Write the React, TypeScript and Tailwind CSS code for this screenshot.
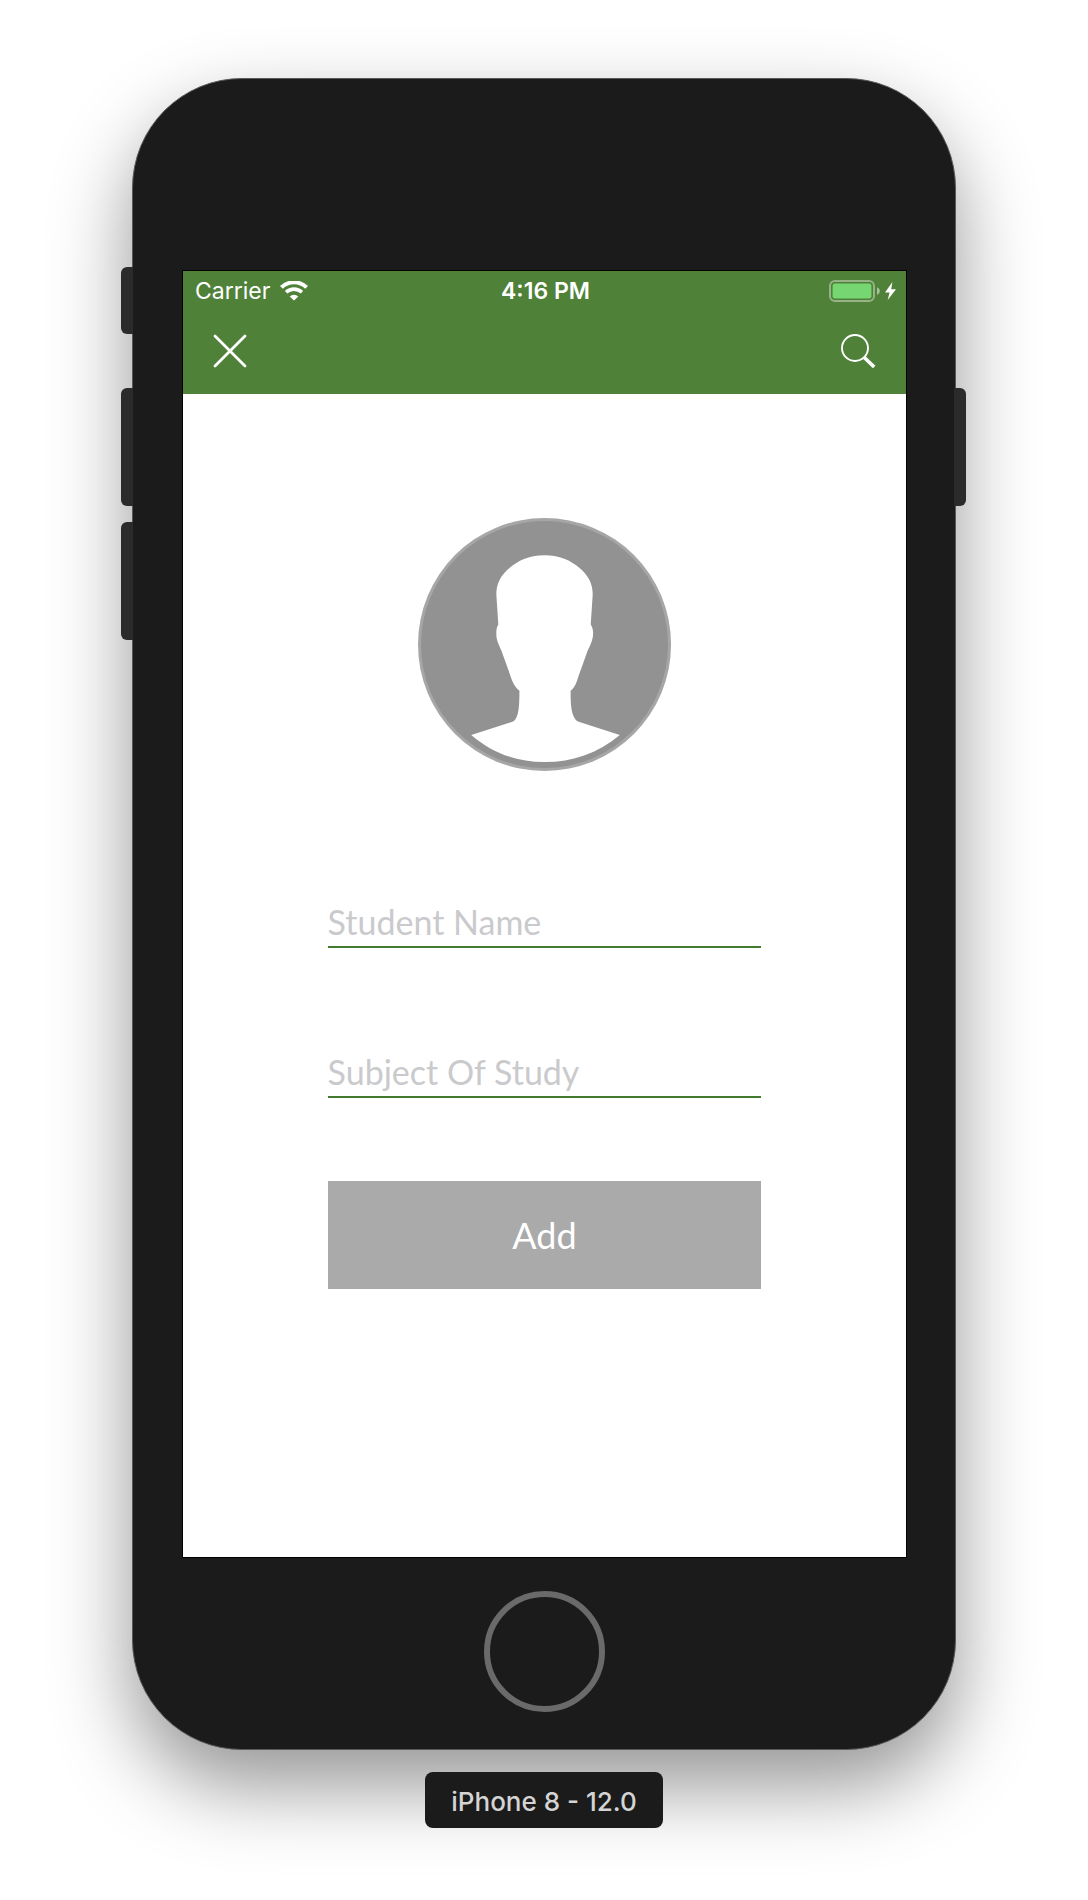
import React from "react";

function WifiIcon() {
  return (
    <svg width="28" height="20" viewBox="0 0 28 20" fill="none" stroke="#fff" aria-hidden="true">
      <path d="M1.4 6.4a18 18 0 0 1 25.200 0" strokeWidth="4" />
      <path d="M6.1 11.300a11.400 11.400 0 0 1 15.800 0" strokeWidth="3.6" />
      <path d="M9.700 15.400a6.200 6.200 0 0 1 8.600 0L14 19.600z" fill="#fff" stroke="none" />
    </svg>
  );
}

function BatteryIcon() {
  return (
    <svg width="52" height="22" viewBox="0 0 52 22" aria-hidden="true">
      <rect x="1" y="1" width="44" height="20" rx="5" fill="none" stroke="#fff" strokeOpacity="0.4" strokeWidth="2" />
      <rect x="3.6" y="3.4" width="38.8" height="15.2" rx="2.4" fill="#76d672" />
      <path d="M48 7.2c1.8.7 2.8 2.2 2.8 3.8s-1 3.1-2.8 3.8z" fill="#fff" fillOpacity="0.5" />
    </svg>
  );
}

function BoltIcon() {
  return (
    <svg width="11" height="18" viewBox="0 0 11 18" fill="#fff" aria-hidden="true">
      <path d="M7.4 0L0 10.4h4.5L2.7 18 11 7.3H6.2z" />
    </svg>
  );
}

function CloseIcon() {
  return (
    <svg width="34" height="34" viewBox="0 0 34 34" fill="none" stroke="#fff" strokeWidth="2.8" strokeLinecap="round" aria-hidden="true">
      <path d="M2 2l30 30M32 2L2 32" />
    </svg>
  );
}

function SearchIcon() {
  return (
    <svg width="35" height="35" viewBox="0 0 35 35" fill="none" stroke="#fff" aria-hidden="true">
      <circle cx="14" cy="14" r="13" strokeWidth="1.9" />
      <path d="M23 23.2L33.2 33" strokeWidth="3.6" />
    </svg>
  );
}

function Avatar() {
  return (
    <svg className="w-[35%] overflow-visible" viewBox="0 0 252 252" role="img" aria-label="Student photo">
      <circle cx="126" cy="126" r="126" fill="#a6a6a6" />
      <circle cx="126" cy="126" r="123" fill="#929292" />
      <path
        fill="#fff"
        d="M126 37C142 37 153 43 160 49C170 57 174 66 174 76L172 106C174 109 175 113 174 119C173 124 171 128 169 132L160 157C158 163 157 168 152 172C152 184 152 199 160 203L201 216C180 234 154 243 126 243S74 234 53 216L94 203C101 200 101 184 101 172C96 168 94 163 92 157L83 132C81 127 78 122 78 116C78 112 78 109 80 106L78 76C78 66 82 57 92 49C99 43 110 37 126 37Z"
      />
    </svg>
  );
}

function Field({ name, label, className }: { name: string; label: string; className: string }) {
  return (
    <div className={className}>
      <input
        name={name}
        type="text"
        aria-label={label}
        placeholder={label}
        className="block h-12 w-full border-b-2 border-[#427a2e] bg-transparent p-0 pb-[3px] font-['Lato',sans-serif] text-[34px] text-gray-700 outline-none placeholder:text-[#cacacd]"
      />
    </div>
  );
}

export default function App() {
  return (
    <main className="flex min-h-screen flex-col items-center bg-white px-10 pt-[78px] pb-[72px] font-['Inter',sans-serif]">
      <div className="relative w-full max-w-[824px]">
        <div className="rounded-[110px] border border-[#5a5a5a] bg-[#1b1b1b] pt-48 pr-[49px] pb-[37px] pl-[50px] shadow-[0_36px_80px_rgba(0,0,0,0.42)]">
          <div className="bg-white outline outline-black">
            <header className="bg-[#4f8138] pb-[3px] text-white">
              <div className="grid h-10 grid-cols-3 items-center pr-[10px] pl-3 text-[23px] leading-6">
                <div className="flex items-center gap-[10px]">
                  <span>Carrier</span>
                  <WifiIcon />
                </div>
                <time className="text-center font-semibold">4:16 PM</time>
                <div className="flex items-center justify-end gap-1">
                  <BatteryIcon />
                  <BoltIcon />
                </div>
              </div>
              <nav className="flex h-20 items-center justify-between px-[30px]">
                <button type="button" aria-label="Close">
                  <CloseIcon />
                </button>
                <button type="button" aria-label="Search">
                  <SearchIcon />
                </button>
              </nav>
            </header>

            <form className="flex flex-col items-center pt-[124px] pb-[268px]" onSubmit={(e) => e.preventDefault()}>
              <Avatar />
              <Field name="student-name" label="Student Name" className="mt-[129px] w-3/5" />
              <Field name="subject" label="Subject Of Study" className="mt-[102px] w-3/5" />
              <button
                type="submit"
                className="mt-[83px] h-[108px] w-3/5 bg-[#aaaaaa] font-['Lato',sans-serif] text-[36px] text-white"
              >
                Add
              </button>
            </form>
          </div>
          <button
            type="button"
            aria-label="Home"
            className="mx-auto mt-[34px] block size-[121px] rounded-full border-6 border-[#6a6a6a]"
          />
        </div>

        <div className="absolute top-[189px] -left-[11px] h-[67px] w-3 rounded-l-md bg-[#2b2b2b]" />
        <div className="absolute top-[310px] -left-[11px] h-[118px] w-3 rounded-l-md bg-[#2b2b2b]" />
        <div className="absolute top-[444px] -left-[11px] h-[118px] w-3 rounded-l-md bg-[#2b2b2b]" />
        <div className="absolute top-[310px] -right-[10px] h-[118px] w-3 rounded-r-md bg-[#2b2b2b]" />
      </div>

      <p className="relative mt-[22px] rounded-lg bg-[#1b1b1b] px-[26px] pt-[14px] pb-[10px] text-[26px] leading-8 font-medium text-[#d4d4d4]">
        iPhone 8 - 12.0
      </p>
    </main>
  );
}
